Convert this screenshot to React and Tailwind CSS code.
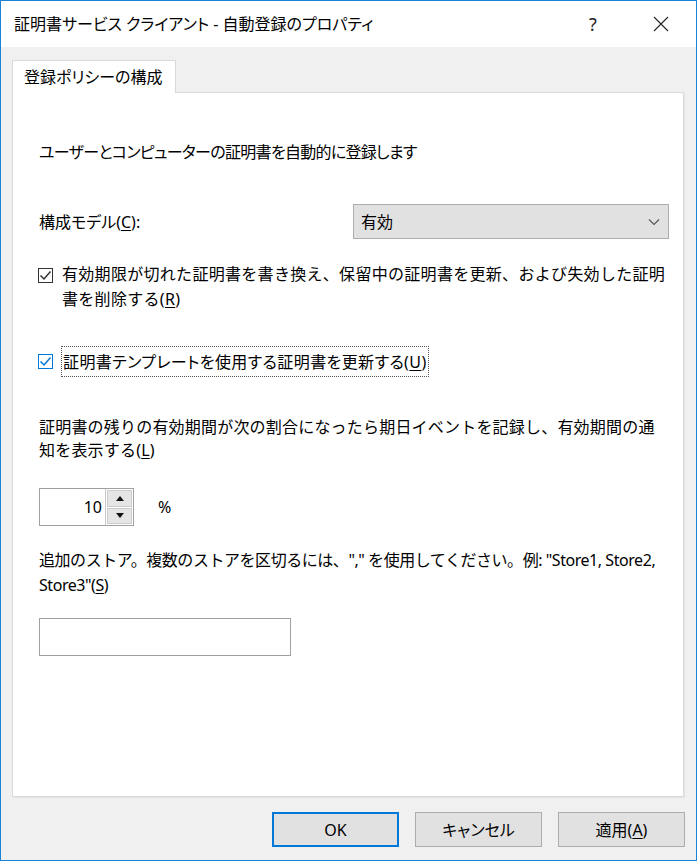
import React from 'react';

const font = { fontFamily: '"Noto Sans", "Noto Sans CJK JP", sans-serif' };

const Check = ({ blue }) => (
  <div className={`w-[15px] h-[15px] shrink-0 bg-white border ${blue ? 'border-[#0078d7]' : 'border-[#333333]'} flex items-center justify-center`}>
    <svg width="13" height="13" viewBox="0 0 13 13">
      <path d="M1.5 6.5 L5 10 L11.5 2.5" fill="none" stroke={blue ? '#0078d7' : '#333333'} strokeWidth="1.5" />
    </svg>
  </div>
);

const U = ({ children }) => <span className="underline underline-offset-2">{children}</span>;

const Btn = ({ children, primary }) => (
  <button
    className={`w-[127px] h-[35px] bg-[#e1e1e1] text-[16px] text-black flex items-center justify-center ${primary ? 'border-2 border-[#0078d7]' : 'border border-[#adadad]'}`}
  >
    {children}
  </button>
);

export default function App() {
  return (
    <div
      className="w-[697px] h-[861px] border border-[#1883d7] bg-[#f0f0f0] flex flex-col text-black [font-feature-settings:'palt'] text-[16px]"
      style={font}
    >
      {/* title bar */}
      <div className="h-[46px] bg-white flex items-center shrink-0">
        <div className="pl-[13px] flex-1 leading-none">証明書サービス クライアント - 自動登録のプロパティ</div>
        <div className="w-[20px] text-center text-[18px] mr-[50px] text-[#222]">?</div>
        <svg width="16" height="16" viewBox="0 0 16 16" className="mr-[27px]">
          <path d="M1 1 L15 15 M15 1 L1 15" stroke="#222" strokeWidth="1.1" />
        </svg>
      </div>

      {/* tab */}
      <div className="pl-[11px] pt-[12px] flex shrink-0">
        <div className="h-[33px] w-[164px] bg-white border border-b-0 border-[#d9d9d9] pl-[11px] flex items-center relative top-[1px] z-10">
          登録ポリシーの構成
        </div>
      </div>

      {/* panel */}
      <div className="ml-[11px] w-[672px] h-[705px] bg-white border border-[#d9d9d9] shadow-[1px_1px_0_#e5e5e5] pl-[26px] pr-[14px] flex flex-col shrink-0">
        <div className="mt-[47px] leading-[24px] tracking-[-0.7px]">ユーザーとコンピューターの証明書を自動的に登録します</div>

        <div className="mt-[40px] flex items-center justify-between">
          <div>構成モデル(<U>C</U>):</div>
          <div className="w-[316px] h-[35px] bg-[#e1e1e1] border border-[#adadad] flex items-center justify-between pl-[7px] pr-[8px]">
            <span>有効</span>
            <svg width="12" height="8" viewBox="0 0 12 8">
              <path d="M1 1.5 L6 6.5 L11 1.5" fill="none" stroke="#555" strokeWidth="1.1" />
            </svg>
          </div>
        </div>

        <div className="mt-[23px] flex items-start gap-[9px] -ml-[1px]">
          <div className="mt-[6px]"><Check /></div>
          <div className="leading-[25px] whitespace-nowrap [font-feature-settings:normal] tracking-[0.3px]">
            有効期限が切れた証明書を書き換え、保留中の証明書を更新、および失効した証明
            <br />
            書を削除する(<U>R</U>)
          </div>
        </div>

        <div className="mt-[34px] flex items-center gap-[8px] -ml-[1px]">
          <Check blue />
          <div className="border border-dotted border-[#555] h-[31px] px-[1px] flex items-center whitespace-nowrap tracking-[0.4px]">
            証明書テンプレートを使用する証明書を更新する(<U>U</U>)
          </div>
        </div>

        <div className="mt-[39px] leading-[23px] whitespace-nowrap [font-feature-settings:normal] tracking-[0.2px]">
          証明書の残りの有効期間が次の割合になったら期日イベントを記録し、有効期間の通
          <br />
          知を表示する(<U>L</U>)
        </div>

        <div className="mt-[26px] flex items-center">
          <div className="w-[95px] h-[38px] border border-[#a0a0a0] flex">
            <div className="flex-1 flex items-center justify-end pr-[3px]">10</div>
            <div className="w-[28px] flex flex-col gap-[1px] p-[1px] border-l border-[#c8c8c8]">
              <div className="flex-1 bg-[#e5e5e5] border border-[#cccccc] flex items-center justify-center">
                <svg width="8" height="5" viewBox="0 0 8 5"><path d="M0 5 L4 0 L8 5 Z" fill="#111" /></svg>
              </div>
              <div className="flex-1 bg-[#e5e5e5] border border-[#cccccc] flex items-center justify-center">
                <svg width="8" height="5" viewBox="0 0 8 5"><path d="M0 0 L4 5 L8 0 Z" fill="#111" /></svg>
              </div>
            </div>
          </div>
          <div className="ml-[24px]">%</div>
        </div>

        <div className="mt-[22px] leading-[25px] whitespace-nowrap [font-feature-settings:normal] tracking-[-0.45px]">
          追加のストア。複数のストアを区切るには、"," を使用してください。例: "Store1, Store2,
          <br />
          Store3"(<U>S</U>)
        </div>

        <div className="mt-[20px] w-[252px] h-[38px] border border-[#a0a0a0] bg-white" />
      </div>

      {/* buttons */}
      <div className="mt-[15px] flex justify-end gap-[16px] pr-[11px]">
        <Btn primary>OK</Btn>
        <Btn>キャンセル</Btn>
        <Btn>
          適用(<U>A</U>)
        </Btn>
      </div>
    </div>
  );
}
